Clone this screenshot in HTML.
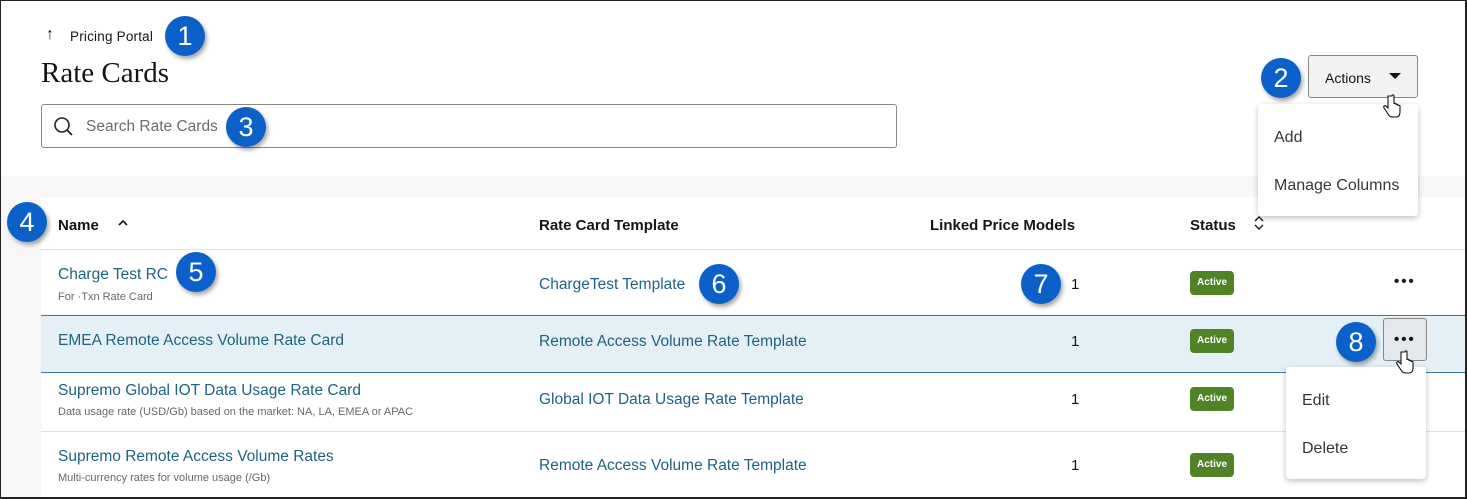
<!DOCTYPE html>
<html><head><style>
*{margin:0;padding:0;box-sizing:border-box}
body{width:1467px;height:499px;overflow:hidden;background:#fff;font-family:"Liberation Sans",sans-serif;color:#161513;position:relative}
.frame{position:absolute;left:0;top:0;width:1467px;height:499px;border:1px solid #222;border-right:2px solid #222;border-bottom:2px solid #222;z-index:50;pointer-events:none}
.a{position:absolute;white-space:nowrap}
.badge{position:absolute;width:40px;height:40px;border-radius:50%;background:#0b61c9;color:#fff;font-size:27px;text-align:center;line-height:40px;box-shadow:2px 3px 4px rgba(0,0,0,.35);z-index:20}
.link{color:#1f6380;font-size:15.5px}
.sub{color:#6d6660;font-size:11px}
.hd{font-weight:bold;font-size:15px}
.active{position:absolute;background:#508226;color:#fff;font-size:10px;font-weight:bold;width:44px;height:24px;line-height:24px;text-align:center;border-radius:4px;left:1190px}
.line{position:absolute;left:41px;right:0;height:1px;background:#e2e0de}
.menu{position:absolute;background:#fff;box-shadow:0 2px 6px rgba(0,0,0,.25);border-radius:3px;z-index:10;font-size:16px;color:#3a3632}
.dots{position:absolute;font-size:15px;letter-spacing:2px;font-weight:bold}
</style></head><body>
<div class="frame"></div>
<div class="a" style="left:46px;top:26px;font-size:16px;font-weight:bold">↑</div>
<div class="a" style="left:70px;top:29px;font-size:13.5px;color:#161513;letter-spacing:0.2px">Pricing Portal</div>
<div class="badge" style="left:165px;top:16px">1</div>
<div class="a" style="left:41px;top:57px;font-family:'Liberation Serif',serif;font-size:29px">Rate Cards</div>
<div class="a" style="left:41px;top:104px;width:856px;height:44px;border:1px solid #8a8784;border-radius:3px"></div>
<svg class="a" style="left:53px;top:116px" width="22" height="22" viewBox="0 0 22 22"><circle cx="9" cy="9" r="7" fill="none" stroke="#222" stroke-width="1.6"/><line x1="14" y1="14" x2="19" y2="19" stroke="#222" stroke-width="1.8"/></svg>
<div class="a" style="left:86px;top:118px;font-size:15.5px;color:#6f6b67">Search Rate Cards</div>
<div class="badge" style="left:226px;top:107px">3</div>
<div class="a" style="left:1308px;top:55px;width:110px;height:43px;border:1px solid #8a8784;border-radius:3px;background:#f3f2f1"></div>
<div class="a" style="left:1325px;top:70px;font-size:14px">Actions</div>
<svg class="a" style="left:1389px;top:73px" width="12" height="8"><polygon points="0,0 12,0 6,6" fill="#161513"/></svg>
<div class="badge" style="left:1261px;top:58px">2</div>
<div class="menu" style="left:1258px;top:104px;width:160px;height:112px"><div class="a" style="left:16px;top:25px">Add</div><div class="a" style="left:16px;top:73px">Manage Columns</div></div>
<div class="a" style="left:0;top:176px;width:1467px;height:21px;background:#f8f7f7"></div>
<div class="a" style="left:0;top:197px;width:41px;height:302px;background:#f8f7f7"></div>
<div class="badge" style="left:7px;top:202px">4</div>
<div class="a hd" style="left:58px;top:217px">Name</div>
<svg class="a" style="left:118px;top:219px" width="10" height="8"><polyline points="1,6 5,2 9,6" fill="none" stroke="#161513" stroke-width="1.6"/></svg>
<div class="a hd" style="left:539px;top:217px">Rate Card Template</div>
<div class="a hd" style="left:930px;top:217px">Linked Price Models</div>
<div class="a hd" style="left:1190px;top:217px">Status</div>
<svg class="a" style="left:1254px;top:215px" width="10" height="17"><polyline points="1,6 5,2 9,6" fill="none" stroke="#161513" stroke-width="1.4"/><polyline points="1,10 5,14 9,10" fill="none" stroke="#161513" stroke-width="1.4"/></svg>
<div class="line" style="top:249px"></div>
<div class="a link" style="left:58px;top:266px">Charge Test RC</div>
<div class="a sub" style="left:58px;top:291px">For ·Txn Rate Card</div>
<div class="badge" style="left:176px;top:252px">5</div>
<div class="a link" style="left:539px;top:276px">ChargeTest Template</div>
<div class="badge" style="left:699px;top:264px">6</div>
<div class="badge" style="left:1021px;top:264px">7</div>
<div class="a" style="left:1071px;top:276px;font-size:15px">1</div>
<div class="active" style="top:271px">Active</div>
<div class="dots" style="left:1394px;top:273px">•••</div>
<div class="a" style="left:41px;top:315px;right:0;height:58px;background:#e4f0f6;border-top:1px solid #3f7c96;border-bottom:1px solid #3f7c96"></div>
<div class="a link" style="left:58px;top:332px">EMEA Remote Access Volume Rate Card</div>
<div class="a link" style="left:539px;top:333px">Remote Access Volume Rate Template</div>
<div class="a" style="left:1071px;top:333px;font-size:15px">1</div>
<div class="active" style="top:329px">Active</div>
<div class="a" style="left:1383px;top:318px;width:44px;height:43px;border:1px solid #8a8784;border-radius:3px;background:#e2e8ec"></div>
<div class="dots" style="left:1394px;top:331px">•••</div>
<div class="badge" style="left:1336px;top:322px">8</div>
<div class="a link" style="left:58px;top:382px">Supremo Global IOT Data Usage Rate Card</div>
<div class="a sub" style="left:58px;top:406px">Data usage rate (USD/Gb) based on the market: NA, LA, EMEA or APAC</div>
<div class="a link" style="left:539px;top:391px">Global IOT Data Usage Rate Template</div>
<div class="a" style="left:1071px;top:391px;font-size:15px">1</div>
<div class="active" style="top:387px">Active</div>
<div class="line" style="top:431px"></div>
<div class="a link" style="left:58px;top:448px">Supremo Remote Access Volume Rates</div>
<div class="a sub" style="left:58px;top:472px">Multi-currency rates for volume usage (/Gb)</div>
<div class="a link" style="left:539px;top:457px">Remote Access Volume Rate Template</div>
<div class="a" style="left:1071px;top:457px;font-size:15px">1</div>
<div class="active" style="top:453px">Active</div>
<div class="menu" style="left:1286px;top:367px;width:140px;height:112px"><div class="a" style="left:16px;top:25px">Edit</div><div class="a" style="left:16px;top:73px">Delete</div></div>
<svg class="a" style="left:1382px;top:94px;z-index:30" width="20" height="26" viewBox="0 0 20 26"><path d="M6 2v12l-2-2c-1-1-3 0-2 2l4 6c1 2 3 3 5 3h3c3 0 4-2 4-5v-6c0-1-2-1-2 0v-1c0-1-2-1-2 0v-1c0-1-2-1-2 0V2c0-1.5-2-1.5-2 0z" fill="#fff" stroke="#111" stroke-width="1.1"/></svg>
<svg class="a" style="left:1395px;top:350px;z-index:30" width="20" height="26" viewBox="0 0 20 26"><path d="M6 2v12l-2-2c-1-1-3 0-2 2l4 6c1 2 3 3 5 3h3c3 0 4-2 4-5v-6c0-1-2-1-2 0v-1c0-1-2-1-2 0v-1c0-1-2-1-2 0V2c0-1.5-2-1.5-2 0z" fill="#fff" stroke="#111" stroke-width="1.1"/></svg>
</body></html>
